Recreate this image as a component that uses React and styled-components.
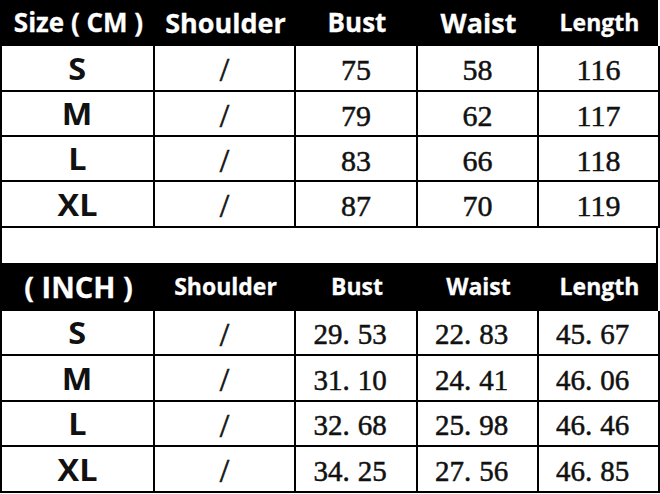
import styled, { createGlobalStyle } from "styled-components";

const GlobalStyle = createGlobalStyle`
  html, body {
    margin: 0;
    padding: 0;
    background: #fff;
  }
  * {
    box-sizing: border-box;
  }
`;

const Page = styled.div`
  width: 660px;
  height: 494px;
  display: flex;
  flex-direction: column;
  background: #fff;
`;

const Row = styled.div`
  display: grid;
  grid-template-columns: 153px 141px 122px 121px 121px;
  width: 658px;
  height: ${(p) => p.$h}px;
  background: ${(p) => (p.$head ? "#000" : "#fff")};
  border-left: 2px solid #000;
`;

const Spacer = styled.div`
  width: 658px;
  height: 35px;
  border-left: 2px solid #000;
  border-right: 2px solid #000;
`;

const HeadCell = styled.div`
  display: flex;
  align-items: center;
  justify-content: center;
  color: #fff;
  font-family: "Open Sans", "Noto Sans", sans-serif;
  font-weight: 700;
  font-size: ${(p) => p.$size}px;
  white-space: pre;
  padding-bottom: 2px;
  -webkit-text-stroke: 0.3px #fff;
`;

const Cell = styled.div`
  display: flex;
  align-items: center;
  justify-content: center;
  border-right: 2px solid #000;
  border-bottom: 2px solid #000;
  color: #111;
  padding-top: 4px;
`;

const SizeText = styled.span`
  font-family: "Open Sans", "Noto Sans", sans-serif;
  font-weight: 700;
  font-size: 30px;
  line-height: 1;
  transform: scaleX(1.08);
  margin-top: -3px;
`;

const Slash = styled.span`
  font-family: "Liberation Serif", serif;
  font-size: 34px;
  line-height: 1;
  -webkit-text-stroke: 0.6px #111;
`;

const CmNum = styled.span`
  font-family: "Liberation Serif", serif;
  font-size: 30px;
  line-height: 1;
  -webkit-text-stroke: 0.5px #111;
`;

const InchNum = styled.span`
  font-family: "Liberation Serif", serif;
  font-size: 29px;
  line-height: 1;
  padding-right: 12px;
  -webkit-text-stroke: 0.5px #111;
`;

const Dot = styled.span`
  padding-right: 8px;
`;

const cmRows = [
  { size: "S", v: ["75", "58", "116"], h: 46 },
  { size: "M", v: ["79", "62", "117"], h: 45 },
  { size: "L", v: ["83", "66", "118"], h: 45 },
  { size: "XL", v: ["87", "70", "119"], h: 46 },
];

const inchRows = [
  { size: "S", v: ["29.53", "22.83", "45.67"], h: 45 },
  { size: "M", v: ["31.10", "24.41", "46.06"], h: 46 },
  { size: "L", v: ["32.68", "25.98", "46.46"], h: 45 },
  { size: "XL", v: ["34.25", "27.56", "46.85"], h: 46 },
];

const Inch = ({ value }) => {
  const [a, b] = value.split(".");
  return (
    <InchNum>
      {a}
      <Dot>.</Dot>
      {b}
    </InchNum>
  );
};

const App = () => {
  return (
    <>
      <GlobalStyle />
      <Page>
        <Row $head $h={46}>
          <HeadCell $size={26}>Size ( CM )</HeadCell>
          <HeadCell $size={27}>Shoulder</HeadCell>
          <HeadCell $size={26}>Bust</HeadCell>
          <HeadCell $size={27}>Waist</HeadCell>
          <HeadCell $size={23}>Length</HeadCell>
        </Row>
        {cmRows.map((r) => (
          <Row key={r.size} $h={r.h}>
            <Cell>
              <SizeText>{r.size}</SizeText>
            </Cell>
            <Cell>
              <Slash>/</Slash>
            </Cell>
            {r.v.map((n, i) => (
              <Cell key={i}>
                <CmNum>{n}</CmNum>
              </Cell>
            ))}
          </Row>
        ))}
        <Spacer />
        <Row $head $h={48}>
          <HeadCell $size={29}>( INCH )</HeadCell>
          <HeadCell $size={23}>Shoulder</HeadCell>
          <HeadCell $size={23}>Bust</HeadCell>
          <HeadCell $size={23}>Waist</HeadCell>
          <HeadCell $size={23}>Length</HeadCell>
        </Row>
        {inchRows.map((r) => (
          <Row key={r.size} $h={r.h}>
            <Cell>
              <SizeText>{r.size}</SizeText>
            </Cell>
            <Cell>
              <Slash>/</Slash>
            </Cell>
            {r.v.map((n, i) => (
              <Cell key={i}>
                <Inch value={n} />
              </Cell>
            ))}
          </Row>
        ))}
      </Page>
    </>
  );
};

export default App;
